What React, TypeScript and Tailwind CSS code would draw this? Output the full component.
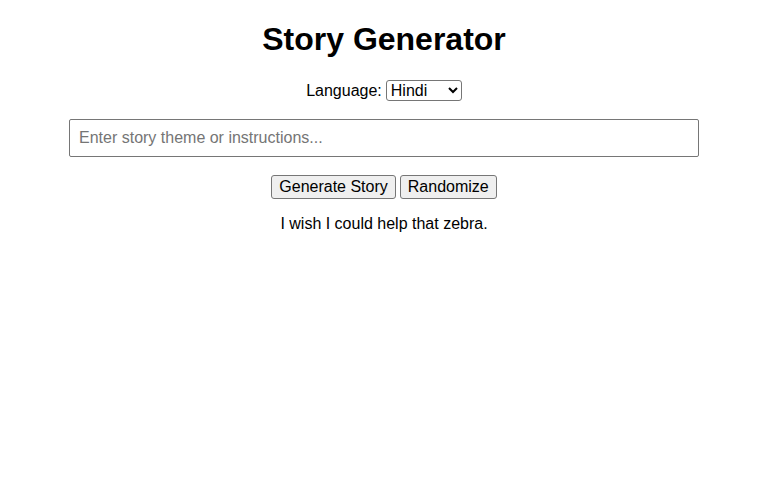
import React from "react";

export default function App() {
  return (
    <div
      className="min-h-[480px] w-full bg-white text-black flex flex-col items-center pt-[21px]"
      style={{ fontFamily: '"Liberation Sans", Arial, sans-serif' }}
    >
      <h1 className="text-[32px] font-bold leading-[37px]">Story Generator</h1>
      <div className="mt-[22px] flex items-center h-[21px] text-[16px]">
        <label htmlFor="lang" className="leading-[18px]">Language:</label>
        <select
          id="lang"
          defaultValue="hi"
          className="ml-[4px] w-[76px] h-[21px] border border-[#767676] rounded-[3px] bg-white text-[16px] leading-[18px]"
          style={{ appearance: "auto" }}
        >
          <option value="en">English</option>
          <option value="hi">Hindi</option>
        </select>
      </div>
      <input
        type="text"
        placeholder="Enter story theme or instructions..."
        className="mt-[18px] w-[630px] h-[38px] border border-[#767676] rounded-[2px] px-[9px] text-[16px] placeholder:text-[#757575] outline-none"
      />
      <div className="mt-[18px] flex gap-[4px]">
        <button className="h-[24px] px-[7px] border border-[#767676] rounded-[3px] bg-[#efefef] text-[16px] leading-[18px]">
          Generate Story
        </button>
        <button className="h-[24px] px-[7px] border border-[#767676] rounded-[3px] bg-[#efefef] text-[16px] leading-[18px]">
          Randomize
        </button>
      </div>
      <p className="mt-[16px] text-[16px] leading-[18px]">I wish I could help that zebra.</p>
    </div>
  );
}
